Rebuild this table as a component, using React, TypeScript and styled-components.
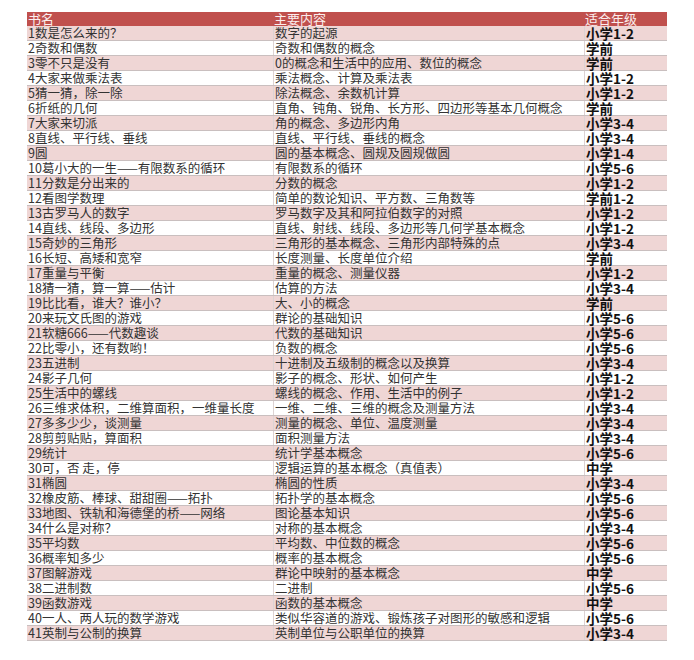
import React from 'react';
import styled, { createGlobalStyle } from 'styled-components';

interface Book {
  title: string;
  content: string;
  grade: string;
}

const books: Book[] = [
  { title: '1数是怎么来的？', content: '数字的起源', grade: '小学1-2' },
  { title: '2奇数和偶数', content: '奇数和偶数的概念', grade: '学前' },
  { title: '3零不只是没有', content: '0的概念和生活中的应用、数位的概念', grade: '学前' },
  { title: '4大家来做乘法表', content: '乘法概念、计算及乘法表', grade: '小学1-2' },
  { title: '5猜一猜，除一除', content: '除法概念、余数机计算', grade: '小学1-2' },
  { title: '6折纸的几何', content: '直角、钝角、锐角、长方形、四边形等基本几何概念', grade: '学前' },
  { title: '7大家来切派', content: '角的概念、多边形内角', grade: '小学3-4' },
  { title: '8直线、平行线、垂线', content: '直线、平行线、垂线的概念', grade: '小学3-4' },
  { title: '9圆', content: '圆的基本概念、圆规及圆规做圆', grade: '小学1-4' },
  { title: '10葛小大的一生——有限数系的循环', content: '有限数系的循环', grade: '小学5-6' },
  { title: '11分数是分出来的', content: '分数的概念', grade: '小学1-2' },
  { title: '12看图学数理', content: '简单的数论知识、平方数、三角数等', grade: '学前1-2' },
  { title: '13古罗马人的数字', content: '罗马数字及其和阿拉伯数字的对照', grade: '小学1-2' },
  { title: '14直线、线段、多边形', content: '直线、射线、线段、多边形等几何学基本概念', grade: '小学1-2' },
  { title: '15奇妙的三角形', content: '三角形的基本概念、三角形内部特殊的点', grade: '小学3-4' },
  { title: '16长短、高矮和宽窄', content: '长度测量、长度单位介绍', grade: '学前' },
  { title: '17重量与平衡', content: '重量的概念、测量仪器', grade: '小学1-2' },
  { title: '18猜一猜，算一算——估计', content: '估算的方法', grade: '小学3-4' },
  { title: '19比比看，谁大？谁小？', content: '大、小的概念', grade: '学前' },
  { title: '20来玩文氏图的游戏', content: '群论的基础知识', grade: '小学5-6' },
  { title: '21软糖666——代数趣谈', content: '代数的基础知识', grade: '小学5-6' },
  { title: '22比零小，还有数哟！', content: '负数的概念', grade: '小学5-6' },
  { title: '23五进制', content: '十进制及五级制的概念以及换算', grade: '小学3-4' },
  { title: '24影子几何', content: '影子的概念、形状、如何产生', grade: '小学1-2' },
  { title: '25生活中的螺线', content: '螺线的概念、作用、生活中的例子', grade: '小学1-2' },
  { title: '26三维求体积，二维算面积，一维量长度', content: '一维、二维、三维的概念及测量方法', grade: '小学3-4' },
  { title: '27多多少少，谈测量', content: '测量的概念、单位、温度测量', grade: '小学3-4' },
  { title: '28剪剪贴贴，算面积', content: '面积测量方法', grade: '小学3-4' },
  { title: '29统计', content: '统计学基本概念', grade: '小学5-6' },
  { title: '30可，否 走，停', content: '逻辑运算的基本概念（真值表）', grade: '中学' },
  { title: '31椭圆', content: '椭圆的性质', grade: '小学3-4' },
  { title: '32橡皮筋、棒球、甜甜圈——拓扑', content: '拓扑学的基本概念', grade: '小学5-6' },
  { title: '33地图、铁轨和海德堡的桥——网络', content: '图论基本知识', grade: '小学5-6' },
  { title: '34什么是对称？', content: '对称的基本概念', grade: '小学3-4' },
  { title: '35平均数', content: '平均数、中位数的概念', grade: '小学5-6' },
  { title: '36概率知多少', content: '概率的基本概念', grade: '小学5-6' },
  { title: '37图解游戏', content: '群论中映射的基本概念', grade: '中学' },
  { title: '38二进制数', content: '二进制', grade: '小学5-6' },
  { title: '39函数游戏', content: '函数的基本概念', grade: '中学' },
  { title: '40一人、两人玩的数学游戏', content: '类似华容道的游戏、锻炼孩子对图形的敏感和逻辑', grade: '小学5-6' },
  { title: '41英制与公制的换算', content: '英制单位与公职单位的换算', grade: '小学3-4' },
];

const GlobalStyle = createGlobalStyle`
  html, body {
    margin: 0;
    padding: 0;
    background: #ffffff;
  }
  body {
    font-family: "Noto Sans CJK SC", "Noto Sans", sans-serif;
  }
`;

const Page = styled.div`
  padding: 12px 0 0 27px;
`;

const Sheet = styled.div`
  width: 640px;
  display: flex;
  flex-direction: column;
`;

const HeaderRow = styled.div`
  display: grid;
  grid-template-columns: 246px 311px 83px;
  height: 14px;
  background-color: #c0504d;
`;

const HeaderCell = styled.div`
  color: #fbeeee;
  font-size: 13px;
  line-height: 14px;
  padding-left: 1px;
  white-space: nowrap;
`;

const Row = styled.div<{ $odd: boolean }>`
  display: grid;
  grid-template-columns: 246px 311px 83px;
  height: 14px;
  border-bottom: 1px solid #c9bfbf;
  background-color: ${props => (props.$odd ? '#efd6d5' : '#ffffff')};
`;

const Cell = styled.div<{ $grade?: boolean }>`
  color: ${props => (props.$grade ? '#111111' : '#333333')};
  font-size: ${props => (props.$grade ? '13.5px' : '12.5px')};
  font-weight: ${props => (props.$grade ? 700 : 400)};
  line-height: 14px;
  padding-left: 1px;
  white-space: nowrap;
  & + & {
    border-left: 1px solid #ddd3d3;
  }
`;

const App: React.FC = () => {
  return (
    <Page>
      <GlobalStyle />
      <Sheet>
        <HeaderRow>
          <HeaderCell>书名</HeaderCell>
          <HeaderCell>主要内容</HeaderCell>
          <HeaderCell>适合年级</HeaderCell>
        </HeaderRow>
        {books.map((book, i) => (
          <Row key={book.title} $odd={i % 2 === 0}>
            <Cell>{book.title}</Cell>
            <Cell>{book.content}</Cell>
            <Cell $grade>{book.grade}</Cell>
          </Row>
        ))}
      </Sheet>
    </Page>
  );
};

export default App;
